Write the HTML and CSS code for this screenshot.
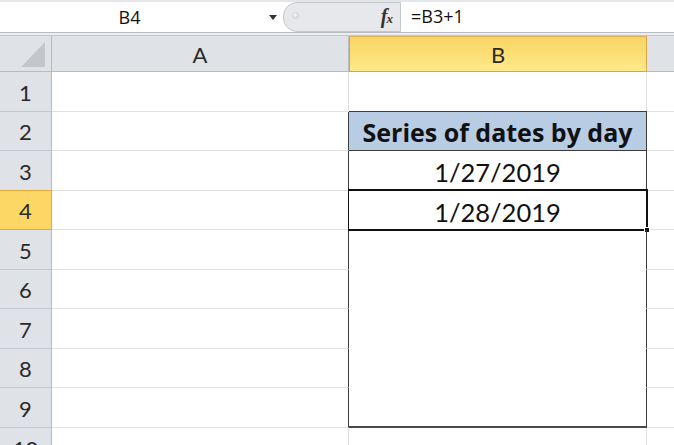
FILE: index.html
```html
<!DOCTYPE html>
<html>
<head>
<meta charset="utf-8">
<link rel="stylesheet" href="styles.css">
</head>
<body>
<div class="fbar">
  <div class="namebox">
    <span class="name">B4</span>
    <span class="arrow"></span>
  </div>
  <div class="fxzone">
    <span class="knob"></span>
    <span class="fx"><i class="f">f</i><i class="x">x</i></span>
  </div>
  <div class="formula">=B3+1</div>
</div>
<div class="strip"></div>
<div class="sheet">
  <div class="corner"><svg width="52" height="36" viewBox="0 0 52 36"><polygon points="45,6 45,31 21,31" fill="#c3c7cc"/></svg></div>
  <div class="colhead">A</div>
  <div class="colhead sel">B</div>
  <div class="colhead rest"></div>

  <div class="rowhead">1</div><div class="cell a"></div><div class="cell b"></div><div class="cell c"></div>
  <div class="rowhead">2</div><div class="cell a dk"></div><div class="cell b tbl title">Series of dates by day</div><div class="cell c"></div>
  <div class="rowhead">3</div><div class="cell a dk"></div><div class="cell b tbl">1/27/2019</div><div class="cell c"></div>
  <div class="rowhead selrow">4</div><div class="cell a dk"></div><div class="cell b tbl active">1/28/2019<span class="selbox"><span class="handle"></span></span></div><div class="cell c"></div>
  <div class="rowhead">5</div><div class="cell a dk"></div><div class="cell b tbl blank"></div><div class="cell c"></div>
  <div class="rowhead">6</div><div class="cell a dk"></div><div class="cell b tbl blank"></div><div class="cell c"></div>
  <div class="rowhead">7</div><div class="cell a dk"></div><div class="cell b tbl blank"></div><div class="cell c"></div>
  <div class="rowhead">8</div><div class="cell a dk"></div><div class="cell b tbl blank"></div><div class="cell c"></div>
  <div class="rowhead">9</div><div class="cell a dk"></div><div class="cell b tbl blank last"></div><div class="cell c"></div>
  <div class="rowhead">10</div><div class="cell a"></div><div class="cell b"></div><div class="cell c"></div>
</div>
</body>
</html>
```
FILE: styles.css
```css
* { box-sizing: border-box; }
html, body { margin: 0; padding: 0; background: #fff; overflow: hidden; }
body { width: 674px; height: 445px; font-family: "Lato", "Open Sans", sans-serif; color: #222; }

.fbar {
  height: 33px;
  display: flex;
  border-top: 2px solid #e3e5e8;
  border-bottom: 1px solid #b9bdc2;
  background: #fff;
}
.namebox {
  width: 283px;
  display: flex;
  align-items: center;
  position: relative;
}
.name {
  flex: 1;
  text-align: center;
  font-family: "Open Sans", sans-serif;
  font-size: 18px;
  color: #111;
  padding-right: 10px;
  line-height: 1;
  margin-top: -1px;
}
.arrow {
  width: 0; height: 0;
  border-left: 4.5px solid transparent;
  border-right: 4.5px solid transparent;
  border-top: 5px solid #333;
  margin-right: 6px;
}
.fxzone {
  width: 118px;
  background: #e6e8eb;
  border: 1px solid #c4c8cd;
  border-radius: 14px 0 0 14px;
  display: flex;
  align-items: center;
  justify-content: space-between;
  padding: 0 7px 0 8px;
}
.knob {
  width: 7px; height: 7px;
  border-radius: 50%;
  background: radial-gradient(circle at 40% 35%, #fafafa, #c9ccd0);
  border: 1px solid #d4d6d9;
  margin-top: -3px;
}
.fx {
  font-family: "Liberation Serif", serif;
  font-weight: bold;
  color: #333;
  font-size: 20px;
  line-height: 1;
  margin-top: -2px;
}
.fx .x { font-size: 13px; margin-left: -1px; }
.formula {
  flex: 1;
  font-family: "Open Sans", sans-serif;
  font-size: 18px;
  color: #111;
  padding-left: 10px;
  display: flex;
  align-items: center;
  margin-top: -2px;
}
.strip {
  height: 3px;
  background: #eceef0;
  border-bottom: 1px solid #c2c6cb;
}

.sheet {
  display: grid;
  grid-template-columns: 52px 297px 298px 1fr;
  grid-template-rows: 36px repeat(9, 39.5px) 40px;
}
.corner {
  background: #dfe3e8;
  border-right: 1px solid #b6bcc3;
  border-bottom: 1px solid #b6bcc3;
}
.corner svg { display: block; }
.colhead {
  background: #dfe3e8;
  border-right: 1px solid #b6bcc3;
  border-bottom: 1px solid #b6bcc3;
  display: flex;
  align-items: center;
  justify-content: center;
  font-size: 22px;
  color: #2a2a2a;
  padding-top: 1px;
}
.colhead.sel {
  background: linear-gradient(#f9d463, #ffe98a);
  border: 1px solid #d9a443;
  border-top: 1px solid #e0b35b;
}
.colhead.rest { border-right: none; }

.rowhead {
  background: #dfe3e8;
  border-right: 1px solid #b6bcc3;
  border-bottom: 1px solid #c3c8ce;
  display: flex;
  align-items: center;
  justify-content: center;
  font-size: 22px;
  color: #2a2a2a;
  padding-top: 2px;
}
.rowhead.selrow {
  background: #fdd766;
  border-top: 1px solid #e3a63b;
  border-bottom: 1px solid #e3a63b;
  border-right: 1px solid #e3a63b;
  margin-top: -1px;
}
.cell {
  border-right: 1px solid #e1e1e1;
  border-bottom: 1px solid #e1e1e1;
}
.cell.c { border-right: none; }
.cell.a.dk { border-right: 1px solid #3c3c3c; }
.cell.b.tbl {
  border-right: 1px solid #3c3c3c;
  border-bottom: 1px solid #3c3c3c;
  display: flex;
  align-items: center;
  justify-content: center;
  font-size: 25.5px;
  color: #111;
  padding-top: 4px;
  position: relative;
}
.cell.b.title {
  border-top: 1px solid #3c3c3c;
  margin-top: -1px;
  background: #b8cce4;
  font-family: "Open Sans", sans-serif;
  font-weight: bold;
  font-size: 25px;
  letter-spacing: 0;
  padding-top: 2px;
}
.cell.b.blank { border-bottom: 1px solid #fff; }
.cell.b.last { border-bottom: 2px solid #4a4a4a; }
.selbox {
  position: absolute;
  left: -1px; right: -2px;
  top: -2px; bottom: -2px;
  border: 2px solid #111;
  border-left-width: 1px;
  pointer-events: none;
}
.handle {
  position: absolute;
  right: -4px; bottom: -4px;
  width: 6px; height: 6px;
  background: #111;
  border: 1px solid #fff;
}
```
